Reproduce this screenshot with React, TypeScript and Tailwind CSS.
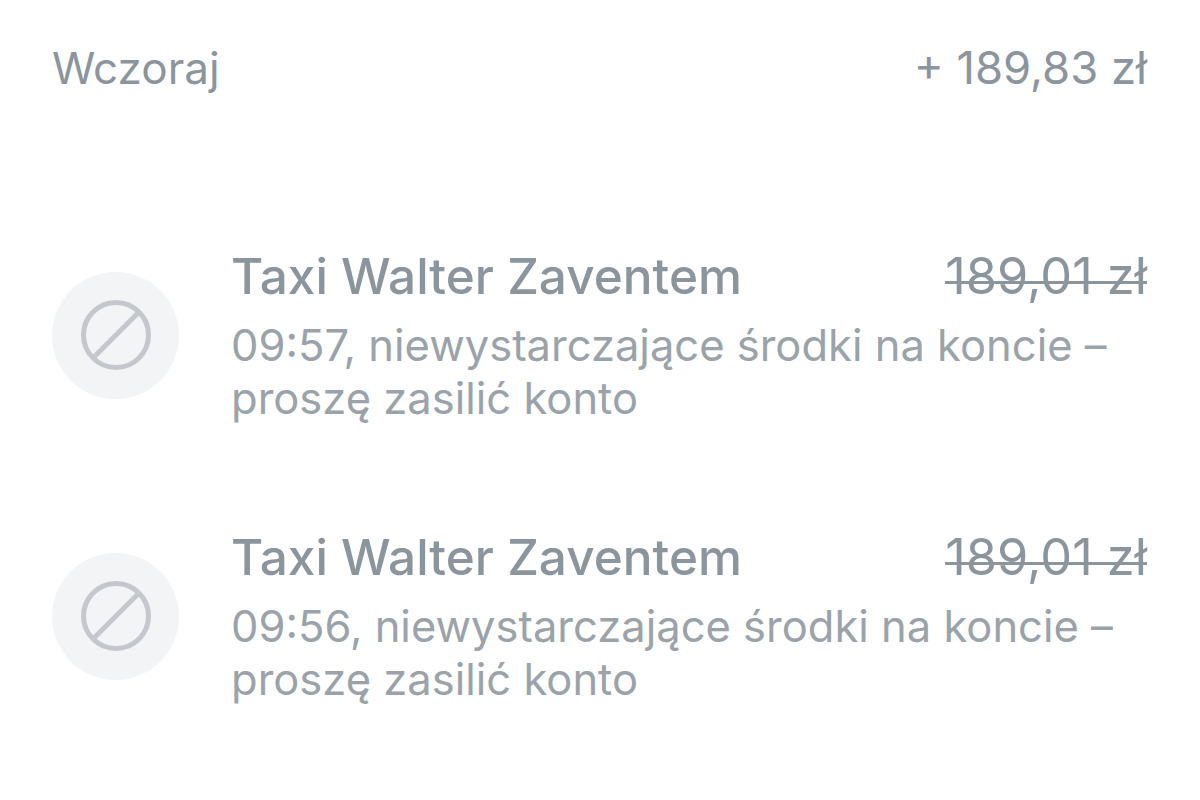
import React from "react";

const Blocked = () => (
  <div className="w-[127px] h-[127px] rounded-full bg-[#f2f4f6] flex items-center justify-center shrink-0">
    <svg width="70" height="70" viewBox="0 0 70 70" fill="none" stroke="#c4c8cc" strokeWidth="5">
      <circle cx="35" cy="35" r="32.5" />
      <path d="M12 58 L58 12" />
    </svg>
  </div>
);

const Row = ({ time }: { time: string }) => (
  <div className="flex items-center">
    <Blocked />
    <div className="ml-[52px] flex-1">
      <div className="flex justify-between items-center h-[62px]">
        <span className="text-[49.5px] font-medium text-[#8b959d]">Taxi Walter Zaventem</span>
        <span className="relative text-[50.5px] text-[#8b959d]">
          189,01 zł
          <span className="absolute left-0 right-0 top-[43px] h-[3px] bg-[#8b959d]" />
        </span>
      </div>
      <p className="text-[43.5px] leading-[53px] text-[#9aa3aa] mt-[12px] whitespace-nowrap">
        {time}, niewystarczające środki na koncie –<br />proszę zasilić konto
      </p>
    </div>
  </div>
);

export default function App() {
  return (
    <div className="w-[1200px] h-[800px] bg-white overflow-hidden pl-[52px] pr-[53px] pt-[40px] font-['Inter',sans-serif]">
      <div className="flex justify-between items-center text-[#8b959d] h-[56px]">
        <span className="text-[44px]">Wczoraj</span>
        <span className="text-[45.4px]">+ 189,83 zł</span>
      </div>
      <div className="mt-[149px] flex flex-col gap-[101px]">
        <Row time="09:57" />
        <Row time="09:56" />
      </div>
    </div>
  );
}
